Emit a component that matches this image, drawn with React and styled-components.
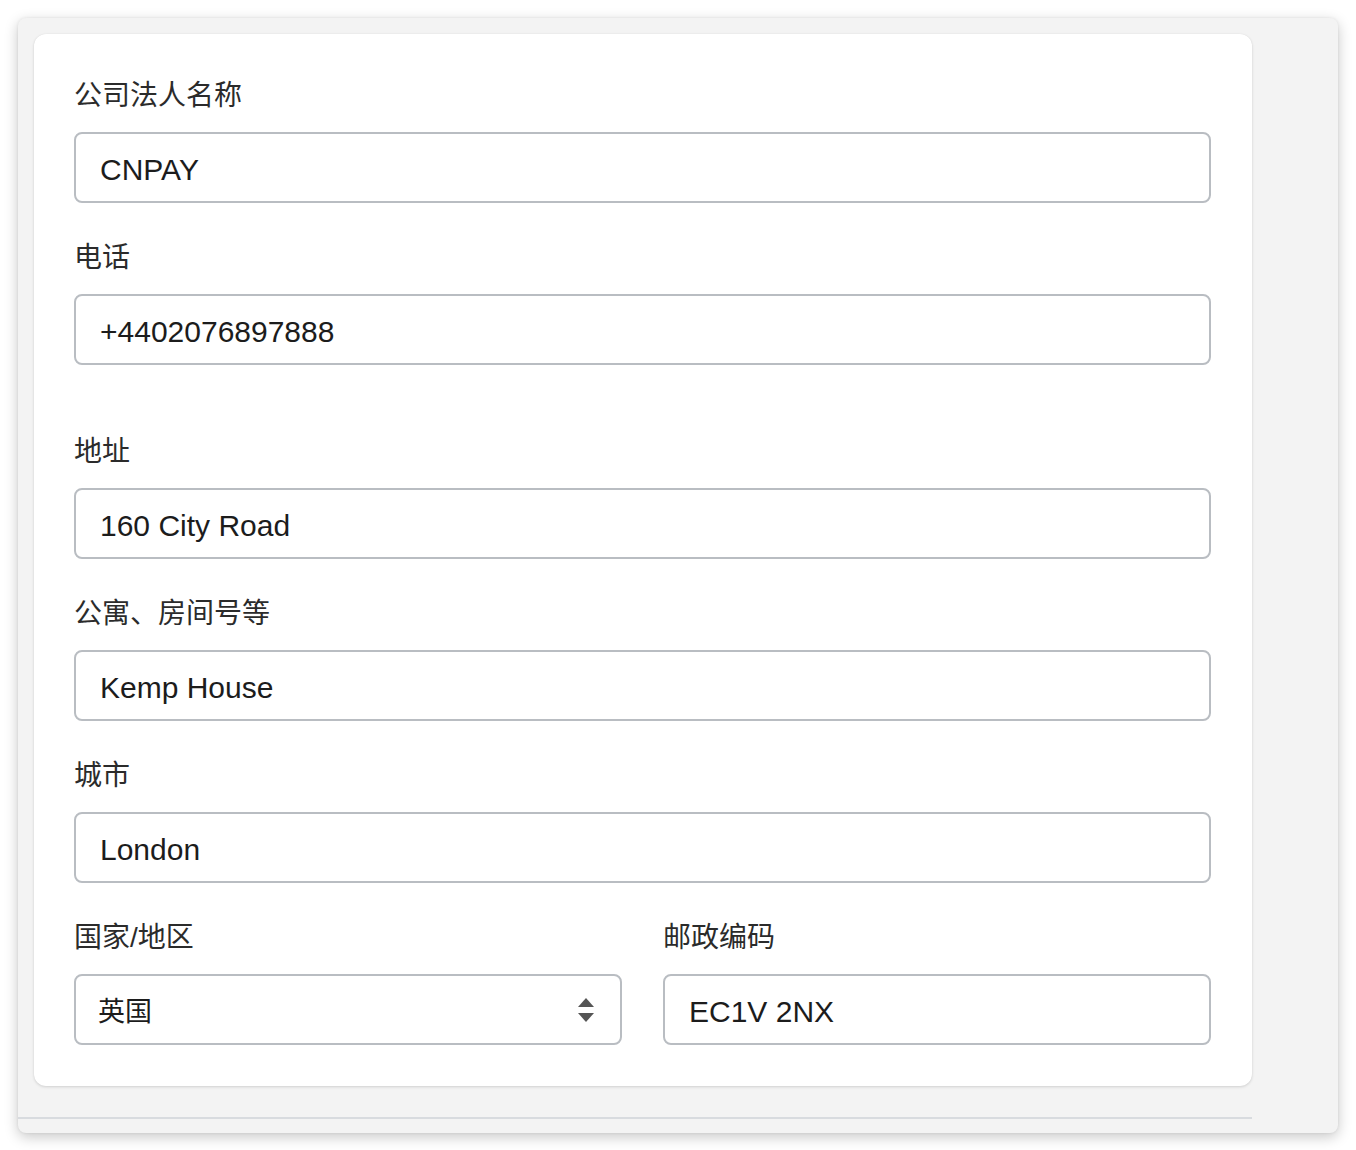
import React from "react";
import styled, { createGlobalStyle } from "styled-components";

const Global = createGlobalStyle`
  html, body {
    margin: 0;
    padding: 0;
    background: #ffffff;
  }
  body {
    font-family: "Liberation Sans", "Noto Sans CJK SC", Arial, sans-serif;
    -webkit-font-smoothing: antialiased;
  }
`;

const Page = styled.div`
  padding: 18px;
  width: 1356px;
  box-sizing: border-box;
`;

const Window = styled.div`
  background: #f3f3f3;
  border-radius: 8px;
  box-shadow: 0 4px 14px rgba(0, 0, 0, 0.22), 0 0 3px rgba(0, 0, 0, 0.08);
  padding: 16px 86px 14px 16px;
  min-height: 1114px;
  box-sizing: border-box;
  display: flex;
  flex-direction: column;
`;

const Card = styled.div`
  background: #ffffff;
  border-radius: 12px;
  box-shadow: 0 1px 3px rgba(0, 0, 0, 0.14), 0 0 1px rgba(0, 0, 0, 0.08);
  padding: 42px 41px 41px 40px;
  display: flex;
  flex-direction: column;
`;

const Divider = styled.div`
  margin: 31px 0 0 -16px;
  height: 2px;
  background: #d8dbdf;
`;

const Field = styled.div`
  display: flex;
  flex-direction: column;
  margin-top: ${(p) => p.$gap || 0}px;
`;

const Label = styled.label`
  font-size: 28px;
  line-height: 36px;
  padding-top: 2px;
  color: #2b2b2b;
  margin-bottom: 18px;
`;

const Input = styled.div`
  height: 71px;
  box-sizing: border-box;
  border: 2px solid #b9bdc2;
  border-radius: 8px;
  background: #fff;
  padding: 4px 24px 0;
  display: flex;
  align-items: center;
  font-size: 30px;
  color: #1c1c1c;
`;

const SelectBox = styled(Input)`
  justify-content: space-between;
  padding: 0 24px 0 22px;
`;

const SelectValue = styled.span`
  font-size: 27px;
`;

const Row = styled.div`
  display: grid;
  grid-template-columns: 1fr 1fr;
  column-gap: 41px;
  margin-top: 35px;
`;

const Arrows = () => (
  <svg width="20" height="28" viewBox="0 0 20 28">
    <path d="M10 2 L18 11 L2 11 Z" fill="#555" />
    <path d="M10 26 L18 17 L2 17 Z" fill="#555" />
  </svg>
);

const fields = [
  { label: "公司法人名称", value: "CNPAY", gap: 0 },
  { label: "电话", value: "+4402076897888", gap: 35 },
  { label: "地址", value: "160 City Road", gap: 67 },
  { label: "公寓、房间号等", value: "Kemp House", gap: 35 },
  { label: "城市", value: "London", gap: 35 },
];

export default function App() {
  return (
    <>
      <Global />
      <Page>
        <Window>
          <Card>
            {fields.map((f) => (
              <Field key={f.label} $gap={f.gap}>
                <Label>{f.label}</Label>
                <Input>{f.value}</Input>
              </Field>
            ))}
            <Row>
              <Field>
                <Label>国家/地区</Label>
                <SelectBox>
                  <SelectValue>英国</SelectValue>
                  <Arrows />
                </SelectBox>
              </Field>
              <Field>
                <Label>邮政编码</Label>
                <Input>EC1V 2NX</Input>
              </Field>
            </Row>
          </Card>
          <Divider />
        </Window>
      </Page>
    </>
  );
}
